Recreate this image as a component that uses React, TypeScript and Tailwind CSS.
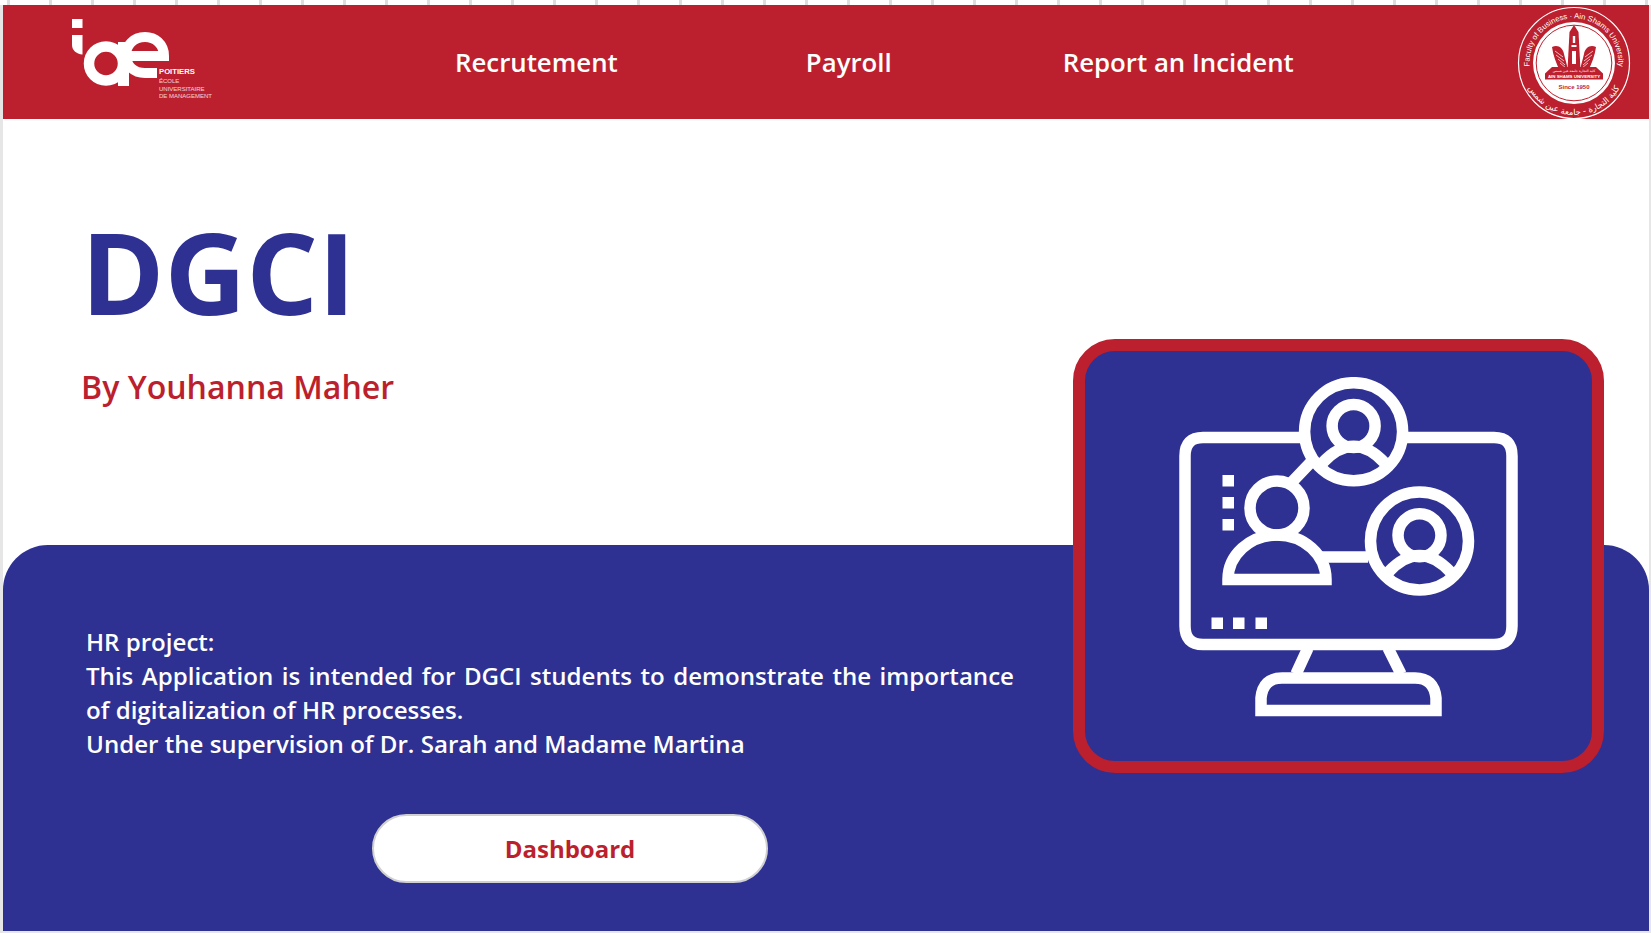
import React from 'react';

const navItems = [
  { label: 'Recrutement', className: 'ml-[233px]' },
  { label: 'Payroll', className: 'ml-[188px]' },
  { label: 'Report an Incident', className: 'ml-[171px]' },
];

function IaeLogo() {
  return (
    <div className="relative w-[150px] h-[90px] shrink-0">
      <svg width="112" height="76" viewBox="0 0 112 76" className="absolute left-0 top-0">
        {/* i */}
        <rect x="0" y="3" width="10.5" height="9" fill="#fff" />
        <path d="M0 19H10.5V38.5C4 38 0 34 0 29Z" fill="#fff" />
        {/* a */}
        <circle cx="34" cy="47.5" r="17" fill="none" stroke="#fff" strokeWidth="10.5" />
        <rect x="46" y="26" width="11" height="44" fill="#fff" />
        {/* e */}
        <path d="M57 40H92C92 28 83 21 73 21C61 21 54 30 54 39C54 50 62 57 73 57H85" fill="none" stroke="#fff" strokeWidth="10" />
      </svg>
      <div className="absolute left-[87px] top-[52px] font-['Liberation_Sans',sans-serif] text-[6px] leading-[7.5px] text-white/80 whitespace-nowrap">
        <div className="font-bold text-white text-[7.7px] leading-[8px] mb-[2px]">POITIERS</div>
        <div>ÉCOLE</div>
        <div>UNIVERSITAIRE</div>
        <div>DE MANAGEMENT</div>
      </div>
    </div>
  );
}

function Falcon({ flip }: { flip?: boolean }) {
  return (
    <g transform={flip ? 'translate(116 0) scale(-1 1)' : undefined}>
      <path d="M36 42C42 39 47 43 48 49C49 54 51 59 52 66H44C40 58 37 50 36 42Z" fill="#bc1f2d" />
      <path d="M39 46L47 52M40 50L48 56M42 54L49 60M44 58L50 63" stroke="#fff" strokeWidth="0.7" />
    </g>
  );
}

function Seal() {
  return (
    <svg width="116" height="116" viewBox="0 0 116 116" className="shrink-0">
      <defs>
        <path id="sealTop" d="M16.2 73.2A44.5 44.5 0 1 1 99.8 73.2" />
        <path id="sealBottom" d="M10.9 80A52 52 0 0 0 105.1 80" />
      </defs>
      <circle cx="58" cy="58" r="55.5" fill="none" stroke="#fff" strokeWidth="1.2" />
      <circle cx="58" cy="58" r="41" fill="#fff" />
      <circle cx="58" cy="58" r="37.8" fill="none" stroke="#bc1f2d" strokeWidth="1" />
      <text fill="#fff" fontSize="7.7" fontFamily="'Liberation Sans', sans-serif">
        <textPath href="#sealTop" startOffset="50%" textAnchor="middle">Faculty of Business · Ain Shams University</textPath>
      </text>
      <text fill="#fff" fontSize="8.4" fontFamily="'DejaVu Sans', sans-serif">
        <textPath href="#sealBottom" startOffset="50%" textAnchor="middle">كلية التجارة - جامعة عين شمس</textPath>
      </text>
      {/* obelisk */}
      <path d="M53.5 27L58 20L62.5 27L64.5 65H51.5Z" fill="#bc1f2d" />
      <rect x="56.8" y="31" width="2.4" height="7" fill="#fff" />
      <rect x="55.5" y="40" width="5" height="2" fill="#fff" />
      <rect x="56" y="46" width="4" height="13" fill="#fff" />
      <Falcon />
      <Falcon flip />
      {/* base */}
      <path d="M36 62H80L87 68.5V74.5H29V68.5Z" fill="#bc1f2d" />
      <text x="58" y="66.6" textAnchor="middle" fill="#fff" fontSize="3.4" fontFamily="'DejaVu Sans', sans-serif">كلية التجارة جامعة عين شمس</text>
      <text x="58" y="73.2" textAnchor="middle" fill="#fff" fontSize="4.4" fontWeight="700" fontFamily="'Liberation Sans', sans-serif">AIN SHAMS UNIVERSITY</text>
      <text x="58" y="84" textAnchor="middle" fill="#bc1f2d" fontSize="6" fontWeight="700" fontFamily="'Liberation Sans', sans-serif">Since 1950</text>
    </svg>
  );
}

function ProfileRing({ cx, cy }: { cx: number; cy: number }) {
  return (
    <g>
      <circle cx={cx} cy={cy} r={49} />
      <circle cx={cx} cy={cy - 5.7} r={21.5} />
      <path d={`M${cx - 31} ${cy + 31}Q${cx} ${cy - 2} ${cx + 31} ${cy + 31}`} />
    </g>
  );
}

function NetworkIcon() {
  return (
    <svg width="339" height="340" viewBox="119 47 339 340" fill="none" stroke="#fff" strokeWidth="11.5">
      {/* monitor */}
      <path d="M245 107.5H143Q125 107.5 125 126V296Q125 314.5 143 314.5H434Q452 314.5 452 296V126Q452 107.5 434 107.5H342" />
      <path d="M248 318L236 344M328 318L341 344" />
      <path d="M201 380.5V368Q203 348 222 348H355Q374 348 376 368V380.5Z" />
      {/* people */}
      <ProfileRing cx={293.6} cy={101.7} />
      <ProfileRing cx={359.5} cy={211} />
      <circle cx={217} cy={178} r={27} />
      <path d="M168 249.5C168 225 190 205 217 205C244 205 266 225 266 249.5Z" />
      <path d="M232 152L252 131M262 227H308" />
      {/* dots */}
      <g fill="#fff" stroke="none">
        <rect x="162.5" y="145" width="11.5" height="11.5" />
        <rect x="162.5" y="167" width="11.5" height="11.5" />
        <rect x="162.5" y="189" width="11.5" height="11.5" />
        <rect x="151.5" y="287.5" width="11.5" height="11.5" />
        <rect x="173" y="287.5" width="11.5" height="11.5" />
        <rect x="195.5" y="287.5" width="11.5" height="11.5" />
      </g>
    </svg>
  );
}

export default function App() {
  const ticks = Array.from({ length: 40 });

  return (
    <div className="relative w-[1651px] h-[933px] overflow-hidden flex flex-col bg-[#e6e6e6] font-['Open_Sans',sans-serif]">
      {/* page rulers */}
      <div className="h-[5px] bg-white flex gap-[39px] pl-[7px] shrink-0">
        {ticks.map((_, i) => (
          <div key={i} className="w-[3px] h-full bg-[#dedede] shrink-0" />
        ))}
      </div>

      <div className="flex-1 flex flex-col ml-[3px] mr-[2px] mb-[2px] bg-white">
        {/* Header */}
        <header className="h-[114px] shrink-0 bg-[#bc1f2d] flex items-center">
          <div className="ml-[69px] mt-[-2px]">
            <IaeLogo />
          </div>
          <nav className="flex items-center text-white text-[25.8px] font-semibold">
            {navItems.map((item) => (
              <a key={item.label} className={item.className}>{item.label}</a>
            ))}
          </nav>
          <div className="ml-auto mr-[17px] mt-[1px]">
            <Seal />
          </div>
        </header>

        {/* Title */}
        <section className="h-[426px] shrink-0 pl-[78px] pt-[82px]">
          <h1 className="text-[112.8px] leading-[140px] font-bold text-[#2e3192]">DGCI</h1>
          <p className="mt-[24px] text-[32.1px] leading-[44px] font-semibold text-[#bc1f2d]">By Youhanna Maher</p>
        </section>

        {/* Intro */}
        <section className="flex-1 rounded-t-[45px] bg-[#2e3192] pl-[83px] pt-[80px] text-white text-[24.08px] leading-[34px] font-semibold">
          <div className="w-[928px]">
            <p>HR project:</p>
            <p className="text-justify">This Application is intended for DGCI students to demonstrate the importance of digitalization of HR processes.</p>
            <p>Under the supervision of Dr. Sarah and Madame Martina</p>
          </div>
          <button className="mt-[53px] ml-[286px] w-[396px] h-[69px] rounded-full bg-white border-2 border-[#d0d0d0] text-[#bc1f2d] text-[24px] font-bold">
            Dashboard
          </button>
        </section>
      </div>

      {/* Card overlapping the band */}
      <div className="absolute left-[1073px] top-[339px] w-[531px] h-[434px] rounded-[42px] border-[12px] border-[#bc1f2d] bg-[#2e3192] pl-[94px] pt-[26px]">
        <NetworkIcon />
      </div>
    </div>
  );
}
